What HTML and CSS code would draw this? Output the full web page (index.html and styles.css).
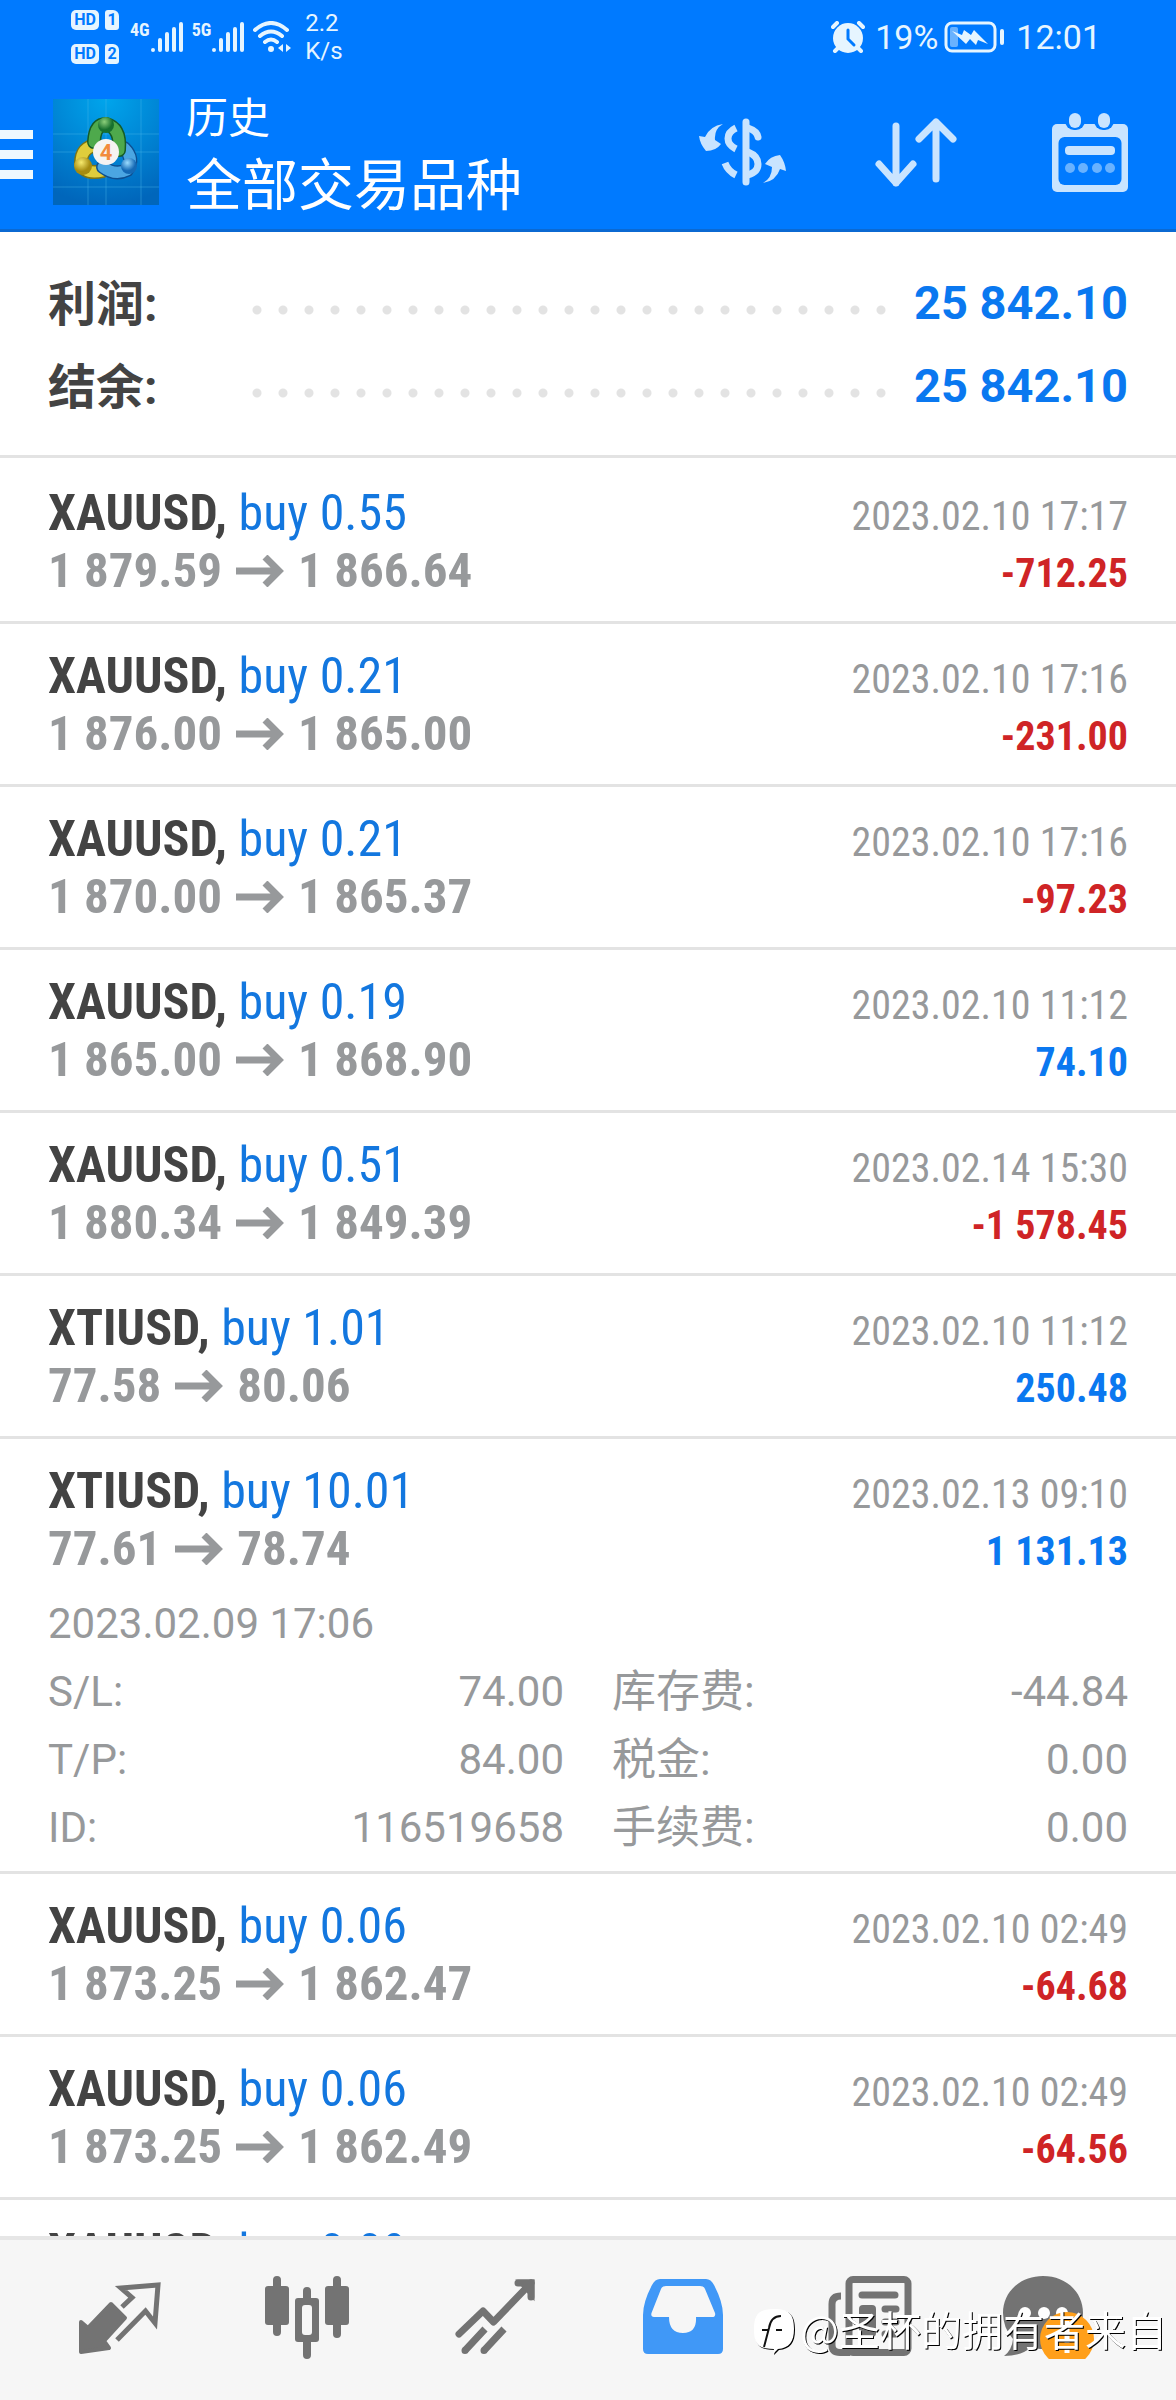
FILE: index.html
```html
<!DOCTYPE html>
<html lang="zh-CN">
<head>
<meta charset="utf-8">
<meta name="viewport" content="width=device-width, initial-scale=1">
<title>历史</title>
<link rel="stylesheet" href="styles.css">
</head>
<body>
<svg width="0" height="0" class="defs" aria-hidden="true">
  <symbol id="arrow" viewBox="0 0 48 32"><path d="M0 16h43M29 2l14 14-14 14" fill="none" stroke="currentColor" stroke-width="7"/></symbol>
  <symbol id="bars" viewBox="0 0 34 32"><path d="M3 29v0M10 19v10M17 13v16M24 8v21M31 3v26" fill="none" stroke="currentColor" stroke-width="4" stroke-linecap="round"/></symbol>
</svg>
<div class="app">
  <header class="top">
    <div class="status">
      <div class="hd">
        <span class="tag">HD</span><span class="sim">1</span>
        <span class="tag">HD</span><span class="sim">2</span>
      </div>
      <div class="signal"><span>4G</span><svg width="34" height="32"><use href="#bars"/></svg></div>
      <div class="signal"><span>5G</span><svg width="34" height="32"><use href="#bars"/></svg></div>
      <svg class="wifi" width="38" height="32" viewBox="0 0 38 32" fill="none" stroke="currentColor" stroke-width="4" stroke-linecap="round"><path d="M2 9Q18-5 34 9M7 15q11-9 22 0M12 21q6-5 12 0"/><circle cx="18" cy="28" r="3" fill="currentColor" stroke="none"/><path d="M25 27l5-4v8zM38 27l-5-4v8z" fill="currentColor" stroke="none"/></svg>
      <div class="rate">2.2<br>K/s</div>
      <div class="right">
        <svg width="34" height="32" viewBox="0 0 34 32"><circle cx="17" cy="17" r="15" fill="currentColor"/><path d="M2 6l4-4M32 6l-4-4M4 30l4-4M30 30l-4-4" stroke="currentColor" stroke-width="4" stroke-linecap="round"/><path d="M17 9v9l6 6" fill="none" stroke="#007aff" stroke-width="3" stroke-linecap="round"/></svg>
        <span>19%</span>
        <svg width="62" height="32" viewBox="0 0 62 32"><rect x="2" y="2" width="49" height="28" rx="6" fill="none" stroke="currentColor" stroke-width="3"/><rect x="6" y="6" width="8" height="20" rx="2" fill="#69b2ff"/><path d="M8 10l10 4 2-5 7 5 3-5 14 14-10-4-2 5-6-6-4 5z" fill="currentColor"/><path d="M58 10v12" stroke="currentColor" stroke-width="4" stroke-linecap="round"/></svg>
        <span class="clock">12:01</span>
      </div>
    </div>
    <div class="bar">
      <button class="menu" aria-label="菜单"><i></i><i></i><i></i></button>
      <svg class="logo" width="106" height="106" viewBox="0 0 106 106">
        <defs>
          <radialGradient id="sky" cx=".5" cy="0" r="1"><stop offset="0" stop-color="#00a5ec"/><stop offset=".55" stop-color="#0083d3"/><stop offset="1" stop-color="#0066bb"/></radialGradient>
          <radialGradient id="gh" cx=".4" cy=".3"><stop offset="0" stop-color="#8ccf7a"/><stop offset="1" stop-color="#17702e"/></radialGradient>
          <radialGradient id="yh" cx=".4" cy=".3"><stop offset="0" stop-color="#f7ea6e"/><stop offset="1" stop-color="#a58b10"/></radialGradient>
          <radialGradient id="bh" cx=".4" cy=".3"><stop offset="0" stop-color="#9bdcff"/><stop offset="1" stop-color="#1469b5"/></radialGradient>
        </defs>
        <rect width="106" height="106" fill="url(#sky)"/>
        <path d="M35 0v106M53 0v106M88 0v106M0 35h106M0 53h106M0 88h106" stroke="#4bb8ee" stroke-opacity=".4"/>
        <g fill="none" stroke-linecap="round">
          <path d="M44 46Q28 48 28 64Q32 76 50 72" stroke="#7c7414" stroke-width="14"/><path d="M44 46Q28 48 28 64Q32 76 50 72" stroke="#dfcd3c" stroke-width="11"/>
          <path d="M50 68Q62 77 74 71Q82 60 71 49" stroke="#0d4f91" stroke-width="14"/><path d="M50 68Q62 77 74 71Q82 60 71 49" stroke="#4ba6e2" stroke-width="11"/>
          <path d="M41 43Q42 25 53 25Q68 29 66 51" stroke="#155c28" stroke-width="14"/><path d="M41 43Q42 25 53 25Q68 29 66 51" stroke="#4ea94c" stroke-width="11"/>
        </g>
        <circle cx="53" cy="26" r="8" fill="url(#gh)"/><circle cx="30" cy="67" r="9" fill="url(#yh)"/><circle cx="76" cy="67" r="8" fill="url(#bh)"/>
        <circle cx="53" cy="53" r="13" fill="#f5f3f2"/>
        <text x="53" y="61" text-anchor="middle" font-size="22" font-weight="700" fill="#f28b3c">4</text>
      </svg>
      <div class="titles"><h1>历史</h1><p>全部交易品种</p></div>
      <button class="act" aria-label="品种"><svg width="88" height="80" viewBox="0 0 88 80"><g fill="none" stroke="currentColor" stroke-width="7"><path d="M48 10v60" stroke-linecap="round"/><path d="M50 16q9 3 10 9" stroke-linecap="round"/><path d="M38 16q-8 4-8 10.500t8 10.500M27 51q3 8 11 12" stroke-width="7"/><path d="M50 40q10 4 10 12t-10 11"/></g><path d="M25 12Q16 17 17 28l6 4q-5 7-15 7Q2 32 1 24l6 1Q12 14 25 12zM65 71Q74 66 74 55l-7-3q5-8 15-9 5 7 6 16l-6-2Q78 69 65 71z" fill="currentColor"/></svg></button>
      <button class="act" aria-label="排序"><svg width="88" height="80" viewBox="0 0 88 80" fill="none" stroke="currentColor" stroke-width="7" stroke-linecap="round" stroke-linejoin="round"><path d="M24 14v57M7 52l17 19 17-19M64 67V10M47 27l17-17 17 17"/></svg></button>
      <button class="act" aria-label="日期"><svg width="88" height="80" viewBox="0 0 88 80"><rect x="6" y="12" width="76" height="68" rx="5" fill="currentColor"/><rect x="12.500" y="25" width="63" height="48" rx="6" fill="#007aff"/><rect x="19" y="-6" width="20" height="24" rx="9" fill="#007aff"/><rect x="48" y="-6" width="20" height="24" rx="9" fill="#007aff"/><rect x="23" y="1" width="12" height="15" rx="6" fill="currentColor"/><rect x="52" y="1" width="12" height="15" rx="6" fill="currentColor"/><rect x="19" y="34" width="50" height="9" rx="4" fill="currentColor"/><g fill="#69b2ff"><circle cx="24" cy="56" r="5"/><circle cx="37" cy="56" r="5"/><circle cx="51" cy="56" r="5"/><circle cx="64" cy="56" r="5"/></g></svg></button>
    </div>
  </header>
  <main>
    <dl class="summary">
      <div><dt>利润:</dt><dd>25 842.10</dd></div>
      <div><dt>结余:</dt><dd>25 842.10</dd></div>
    </dl>
    <ul class="deals">
      <li><h2>XAUUSD, <span>buy 0.55</span></h2><time>2023.02.10 17:17</time><p class="price">1 879.59<svg><use href="#arrow"/></svg>1 866.64</p><b class="loss">-712.25</b></li>
      <li><h2>XAUUSD, <span>buy 0.21</span></h2><time>2023.02.10 17:16</time><p class="price">1 876.00<svg><use href="#arrow"/></svg>1 865.00</p><b class="loss">-231.00</b></li>
      <li><h2>XAUUSD, <span>buy 0.21</span></h2><time>2023.02.10 17:16</time><p class="price">1 870.00<svg><use href="#arrow"/></svg>1 865.37</p><b class="loss">-97.23</b></li>
      <li><h2>XAUUSD, <span>buy 0.19</span></h2><time>2023.02.10 11:12</time><p class="price">1 865.00<svg><use href="#arrow"/></svg>1 868.90</p><b>74.10</b></li>
      <li><h2>XAUUSD, <span>buy 0.51</span></h2><time>2023.02.14 15:30</time><p class="price">1 880.34<svg><use href="#arrow"/></svg>1 849.39</p><b class="loss">-1 578.45</b></li>
      <li><h2>XTIUSD, <span>buy 1.01</span></h2><time>2023.02.10 11:12</time><p class="price">77.58<svg><use href="#arrow"/></svg>80.06</p><b>250.48</b></li>
      <li class="open"><h2>XTIUSD, <span>buy 10.01</span></h2><time>2023.02.13 09:10</time><p class="price">77.61<svg><use href="#arrow"/></svg>78.74</p><b>1 131.13</b>
        <div class="detail">
          <p>2023.02.09 17:06</p>
          <dl>
            <div><dt>S/L:</dt><dd>74.00</dd></div><div><dt class="zh">库存费:</dt><dd>-44.84</dd></div>
            <div><dt>T/P:</dt><dd>84.00</dd></div><div><dt class="zh">税金:</dt><dd>0.00</dd></div>
            <div><dt>ID:</dt><dd>116519658</dd></div><div><dt class="zh">手续费:</dt><dd>0.00</dd></div>
          </dl>
        </div>
      </li>
      <li><h2>XAUUSD, <span>buy 0.06</span></h2><time>2023.02.10 02:49</time><p class="price">1 873.25<svg><use href="#arrow"/></svg>1 862.47</p><b class="loss">-64.68</b></li>
      <li><h2>XAUUSD, <span>buy 0.06</span></h2><time>2023.02.10 02:49</time><p class="price">1 873.25<svg><use href="#arrow"/></svg>1 862.49</p><b class="loss">-64.56</b></li>
      <li><h2>XAUUSD, <span>buy 0.09</span></h2></li>
    </ul>
  </main>
  <nav class="tabs">
    <button aria-label="报价"><svg viewBox="0 0 84 84"><path d="M33 29L47 43 26 66l5 7L3 77V47l7 6z" fill="currentColor" stroke="currentColor" stroke-width="4" stroke-linejoin="round"/><path d="M44 32l10-9.500L43 13l37-3-3 38-9.500-12L39 65" fill="none" stroke="currentColor" stroke-width="5"/></svg></button>
    <button aria-label="图表"><svg viewBox="0 0 84 84"><g stroke="currentColor" stroke-width="8" stroke-linecap="round"><path d="M12 5v52M42 16v64M72 5v54"/></g><g fill="currentColor"><rect y="11" width="24" height="39" rx="3"/><rect x="60" y="11" width="24" height="39" rx="3"/><rect x="30" y="23" width="24" height="44" rx="3"/></g><rect x="37" y="30" width="10" height="30" rx="3" fill="#f6f6f6"/></svg></button>
    <button aria-label="交易"><svg viewBox="0 0 84 84" fill="none" stroke="currentColor" stroke-width="7"><path d="M6 59l24-23 10.500 11L78 8" stroke-linecap="round" stroke-linejoin="round"/><path d="M65 8h13v14" stroke-linecap="round"/><path d="M70 8h8v9z" fill="currentColor"/><path d="M12 75.500v0M31 75.500v0" stroke-linecap="round"/><path d="M12 75.500L32 54M31 75.500L51 54"/></svg></button>
    <button class="on" aria-label="历史" aria-current="page"><svg viewBox="0 0 84 84"><path fill-rule="evenodd" fill="currentColor" d="M19 4h46q5 0 8 6 9 17 9 30v34q0 5-5 5H7q-5 0-5-5V40Q2 27 11 10q3-6 8-6zM25 11q-4 0-5 3L10.500 38q-1 4 2.500 4h15q0 16 14 16t13-16h16q4 0 3-4L64 14q-1-3-5-3z"/></svg></button>
    <button aria-label="新闻"><svg viewBox="0 0 84 84"><g fill="none" stroke="currentColor" stroke-width="7"><rect x="21" y="4.500" width="59" height="73" rx="4"/><path d="M13 21q-9 0-9 8v41q0 7.500 8 7.500h10"/><path d="M34 20h33M57 34h11M57 47h11M57 59h11" stroke-linecap="round"/></g><rect x="31" y="30" width="17" height="32" rx="4" fill="currentColor"/></svg></button>
    <button aria-label="消息"><svg class="wide" viewBox="0 0 112 84"><path d="M41 1c23 0 40 16 40 37S64 74 42 74q-8 0-13-2-9 9-27 9 8-6 9-17Q1 53 1 38C1 17 18 1 41 1z" fill="currentColor"/><g fill="#fff"><circle cx="23" cy="38" r="6"/><circle cx="42" cy="38" r="6"/><circle cx="60" cy="38" r="6"/></g><circle cx="65" cy="64" r="27" fill="#ff9f1a"/><path d="M65 46v22M65 74v4" stroke="#fff" stroke-width="5"/></svg></button>
    <div class="mark"><svg width="42" height="48" viewBox="0 0 42 48"><path d="M21 1c15 0 20 5 20 20 0 13-5 19-16 20l-5 5 1-5C5 41 1 36 1 21 1 6 6 1 21 1z" fill="#fff"/><path d="M28 8q-10 0-12 12L11 39M9 22h7M23 22h6" fill="none" stroke="#111" stroke-width="2"/></svg><span>@圣杯的拥有者来自</span></div>
  </nav>
</div>
</body>
</html>
```
FILE: styles.css
```css
* { box-sizing: border-box; margin: 0; padding: 0; }

body {
  font-family: Roboto, "Noto Sans CJK SC", sans-serif;
  color: #434343;
  background: #fff;
}

.defs { position: absolute; }
button { border: 0; background: none; color: inherit; }
ul { list-style: none; }

.app { display: flex; flex-direction: column; height: 100vh; }

/* header */
.top { background: #007aff; border-bottom: 3px solid #0b69d2; color: #e6f5ff; }

.status { display: flex; align-items: center; height: 74px; padding: 0 75px 0 71px; }
.hd { display: grid; grid-template-columns: 28px 14px; gap: 14px 6px; margin-right: 11px; }
.hd span {
  height: 20px;
  background: currentColor;
  border-radius: 5px;
  text-align: center;
  font-size: 16px;
  font-weight: 700;
  line-height: 20px;
  -webkit-text-fill-color: #007aff;
}
.hd .sim { border-radius: 3px 6px 3px 3px; }
.signal { display: flex; margin-right: 8px; }
.signal span { font: 700 18px/18px "Roboto Condensed", sans-serif; }
.wifi { margin-right: 14px; }
.rate { font-size: 24px; line-height: 28px; }
.right { display: flex; align-items: center; margin-left: auto; font-size: 34px; line-height: 40px; }
.right span { margin: 0 6px 0 10px; }
.right .clock { margin: 0 0 0 10px; }

.bar { display: flex; align-items: center; height: 155px; padding-right: 42px; }
.menu { display: flex; flex-direction: column; gap: 11px; width: 33px; margin-right: 20px; padding-top: 5px; }
.menu i { height: 9px; background: #eef8ff; }
.titles { flex: 1; margin-left: 27px; padding-bottom: 6px; color: #fff; font-family: "Noto Sans CJK SC", sans-serif; }
.titles h1 { font-size: 42px; font-weight: 400; line-height: 64px; }
.titles p { font-size: 56px; line-height: 68px; }
.act { margin-left: 86px; color: #c9e4ff; }
.act svg { display: block; }

/* history */
main { flex: 1; min-height: 0; overflow: hidden; }
.summary { padding: 29px 48px 28px; }
.summary div { display: flex; height: 83px; align-items: center; font-size: 48px; font-weight: 700; }
.summary dt { width: 196px; padding-bottom: 6px; }
.summary dd { display: contents; color: #0a78f0; font-size: 47px; }
.summary dt + dd::before {
  content: "";
  flex: 1;
  height: 10px;
  margin: 14px 24px 0 0;
  background: radial-gradient(circle, #e3e3e3 4px, transparent 5px) 0 0 / 26px 10px;
}

.deals li {
  display: grid;
  grid-template: 57px 57px / 1fr auto;
  align-items: baseline;
  padding: 24px 48px 22px;
  border-top: 3px solid #e3e3e3;
  font: 400 40px/57px "Roboto Condensed", sans-serif;
  color: #97999b;
}
.deals li:first-child { padding-top: 27px; }
.deals h2 { font-size: 50px; color: #434343; }
.deals h2 span { font-weight: 400; color: #1377df; }
.deals time { text-align: right; }
.deals b { text-align: right; color: #0a78f0; }
.deals .loss { color: #cf2426; }
.price { font-size: 49px; font-weight: 700; }
.price svg { width: 48px; height: 32px; margin: 0 14px; }

.deals .open { padding-bottom: 9px; }
.detail { grid-column: 1 / -1; margin-top: 13px; font: 400 42px/68px Roboto, "Noto Sans CJK SC", sans-serif; }
.detail dl { display: grid; grid-template-columns: 1fr 1fr; column-gap: 48px; }
.detail dl div { display: flex; justify-content: space-between; height: 68px; }
.detail .zh { font-size: 44px; }

/* tab bar */
.tabs {
  position: relative;
  display: grid;
  grid-template-columns: repeat(6, 1fr);
  height: 164px;
  padding: 0 24px 6px 26px;
  border-top: 4px solid #e6e6e6;
  background: #f6f6f6;
  color: #737373;
}
.tabs button { display: flex; align-items: center; justify-content: center; }
.tabs button svg { width: 84px; height: 84px; }
.tabs button .wide { width: 112px; }
.tabs .on { color: #4098f7; }

.mark {
  position: absolute;
  right: 9px;
  bottom: 40px;
  display: flex;
  align-items: center;
  gap: 5px;
  color: #fff;
  font: 400 41px/48px "Noto Sans CJK SC", sans-serif;
  filter: drop-shadow(1px 1px 0 #000);
}
.mark span { padding-bottom: 8px; }
```
